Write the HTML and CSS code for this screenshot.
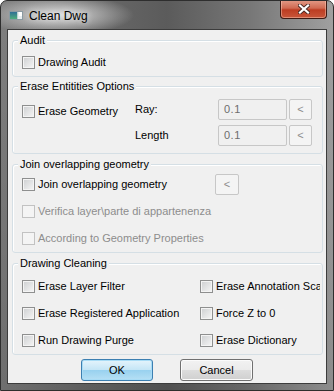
FILE: index.html
```html
<!DOCTYPE html>
<html lang="en">
<head>
  <meta charset="UTF-8">
  <title>Clean Dwg</title>
  <link rel="stylesheet" href="styles.css">
</head>
<body>

<div class="window">
  <!-- barra del titolo -->
  <div class="titlebar">
    <svg class="app-icon" width="14" height="9" viewBox="0 0 14 9">
      <defs>
        <linearGradient id="ig" x1="0" y1="0" x2="0" y2="1">
          <stop offset="0" stop-color="#2f6f95"/>
          <stop offset="1" stop-color="#4fae7c"/>
        </linearGradient>
      </defs>
      <rect x="0.5" y="0.5" width="13" height="8" fill="#e8eef0" stroke="#8a9aa2"/>
      <rect x="1" y="1" width="7" height="7" fill="url(#ig)"/>
      <rect x="8" y="1" width="1" height="7" fill="#b9d3d0"/>
      <rect x="10" y="1" width="3" height="4" fill="#ffffff"/>
    </svg>
    <span class="title">Clean Dwg</span>
    <div class="close-btn">
      <svg width="12" height="10" viewBox="0 0 12 10">
        <path d="M2 1.5 L10 8.5 M10 1.5 L2 8.5" stroke="#4a2a24" stroke-width="4" stroke-linecap="square"/>
        <path d="M2 1.5 L10 8.5 M10 1.5 L2 8.5" stroke="#ffffff" stroke-width="2.2" stroke-linecap="square"/>
      </svg>
    </div>
  </div>

  <!-- area client -->
  <div class="client">

    <fieldset class="group g-audit">
      <legend>Audit</legend>
      <div class="row">
        <label class="check"><span class="box"></span>Drawing Audit</label>
      </div>
    </fieldset>

    <fieldset class="group g-erase">
      <legend>Erase Entitities Options</legend>
      <div class="erase-grid">
        <label class="check low"><span class="box"></span>Erase Geometry</label>
        <span class="field-label">Ray:</span>
        <span class="field">0.1</span>
        <span class="pick">&lt;</span>

        <span></span>
        <span class="field-label">Length</span>
        <span class="field">0.1</span>
        <span class="pick">&lt;</span>
      </div>
    </fieldset>

    <fieldset class="group g-join">
      <legend>Join overlapping geometry</legend>
      <div class="row join-row">
        <label class="check"><span class="box"></span>Join overlapping geometry</label>
        <span class="pick">&lt;</span>
      </div>
      <div class="row">
        <label class="check disabled"><span class="box"></span>Verifica layer\parte di appartenenza</label>
      </div>
      <div class="row">
        <label class="check disabled"><span class="box"></span>According to Geometry Properties</label>
      </div>
    </fieldset>

    <fieldset class="group g-clean">
      <legend>Drawing Cleaning</legend>
      <div class="clean-grid">
        <label class="check"><span class="box"></span>Erase Layer Filter</label>
        <label class="check"><span class="box"></span>Erase Annotation Scale</label>
        <label class="check"><span class="box"></span>Erase Registered Application</label>
        <label class="check"><span class="box"></span>Force Z to 0</label>
        <label class="check"><span class="box"></span>Run Drawing Purge</label>
        <label class="check"><span class="box"></span>Erase Dictionary</label>
      </div>
    </fieldset>

    <div class="buttons">
      <button class="btn btn-default">OK</button>
      <button class="btn btn-cancel">Cancel</button>
    </div>

  </div>
</div>

</body>
</html>
```

FILE: styles.css
```css
/* finestra */
body {
  margin: 0;
  background: #ffffff;
  font-family: 'Liberation Sans', Arial, sans-serif;
  font-size: 11px;
  color: #000;
}
.window {
  width: 334px;
  height: 391px;
  box-sizing: border-box;
  border: 1px solid #2e2e2e;
  border-radius: 7px 7px 0 0;
  background:
    radial-gradient(ellipse 75px 20px at 58px 14px, rgba(228,228,228,0.95), rgba(228,228,228,0)),
    linear-gradient(to bottom, rgba(0,0,0,0) 28px, rgba(0,0,0,0.12)),
    linear-gradient(to right, #7e7e7e, #6b6b6b 25%, #5b5b5b 50%, #777777 75%, #a0a0a0);
  display: flex;
  flex-direction: column;
  overflow: hidden;
}
.titlebar {
  height: 28px;
  display: flex;
  align-items: flex-start;
  flex-shrink: 0;
}
.app-icon {
  margin: 10px 0 0 8px;
}
.title {
  margin: 8px 0 0 6px;
  font-size: 12px;
  line-height: 14px;
  color: #000;
  text-shadow: 0 0 6px #f2f2f2;
}
.close-btn {
  margin: -1px 6px 0 auto;
  width: 45px;
  height: 18px;
  border: 1px solid #3f1b14;
  border-top: none;
  border-radius: 0 0 4px 4px;
  background: linear-gradient(to bottom, #e39c88 0%, #d06a52 45%, #bd3d22 55%, #c8563a 100%);
  box-shadow: inset 0 0 0 1px rgba(255,210,190,0.45);
  display: flex;
  align-items: center;
  justify-content: center;
}

.client {
  flex: 1;
  margin: 0 6px 6px 6px;
  border: 1px solid #3c3c3c;
  background: #f0f0f0;
  display: flex;
  flex-direction: column;
}

/* group box */
.group {
  margin: 4px 3px 0 4px;
  padding: 0 0 0 9px;
  border: 1px solid #d5dfe5;
  border-radius: 3px;
  box-shadow: inset 1px 1px 0 #fff;
  min-width: 0;
}
.group legend {
  margin-left: -4px;
  padding: 0 2px;
  line-height: 13px;
  background: #f0f0f0;
}
.g-audit {
  padding-top: 5px;
  padding-bottom: 4px;
}
.g-erase {
  margin-top: 3px;
  padding-top: 3px;
  padding-bottom: 5px;
}
.g-join {
  padding-bottom: 0;
}
.g-clean {
  padding-top: 3px;
  padding-bottom: 0;
}

.row {
  height: 20px;
  display: flex;
  align-items: center;
}
.g-join .row {
  height: 27px;
}

/* checkbox */
.check {
  display: flex;
  align-items: center;
  white-space: nowrap;
  line-height: 13px;
}
.check .box {
  width: 11px;
  height: 11px;
  margin-right: 3px;
  border: 1px solid #8e8f8f;
  background: linear-gradient(135deg, #cdcfd1, #f6f6f6);
  box-shadow: inset 0 0 0 1px #f4f4f4;
  flex-shrink: 0;
}
.check.disabled {
  color: #8d8d8d;
}
.check.disabled .box {
  border-color: #c2c2c2;
  background: #f4f4f4;
}
.check.low {
  margin-top: 4px;
}

/* campi */
.erase-grid {
  display: grid;
  grid-template-columns: 113px 83px 69px 24px;
  grid-auto-rows: 26px;
  align-items: center;
}
.field-label {
  line-height: 13px;
}
.field {
  box-sizing: border-box;
  height: 21px;
  border: 1px solid #c7c7c7;
  border-radius: 2px;
  background: #f0f0f0;
  color: #6d6d6d;
  padding-left: 5px;
  line-height: 19px;
  letter-spacing: 0.5px;
}
.pick {
  width: 24px;
  height: 21px;
  box-sizing: border-box;
  margin-left: 2px;
  border: 1px solid #c7c7c7;
  border-radius: 2px;
  background: #f4f4f4;
  color: #8d8d8d;
  text-align: center;
  line-height: 19px;
}
.erase-grid .pick {
  width: 23px;
}
.join-row .pick {
  margin-left: 48px;
}

.clean-grid {
  display: grid;
  grid-template-columns: 178px 120px;
  grid-auto-rows: 27px;
  align-items: center;
}
.clean-grid .check {
  overflow: hidden;
}

/* pulsanti */
.buttons {
  display: flex;
  justify-content: center;
  gap: 27px;
  margin-top: 4px;
}
.btn {
  height: 22px;
  box-sizing: border-box;
  border-radius: 3px;
  font-family: 'Liberation Sans', Arial, sans-serif;
  font-size: 11px;
  padding: 0;
  color: #000;
}
.btn-default {
  width: 72px;
  border: 1px solid #3c7fb1;
  background: linear-gradient(to bottom, #e5f4fc 0%, #c4e5f6 50%, #98d1ef 51%, #b6e0f5 100%);
  box-shadow: inset 0 0 0 1px #a8dcf6;
}
.btn-cancel {
  width: 73px;
  border: 1px solid #707070;
  background: linear-gradient(to bottom, #f2f2f2 0%, #ebebeb 50%, #dddddd 51%, #cfcfcf 100%);
  box-shadow: inset 0 0 0 1px #fbfbfb;
}
```
